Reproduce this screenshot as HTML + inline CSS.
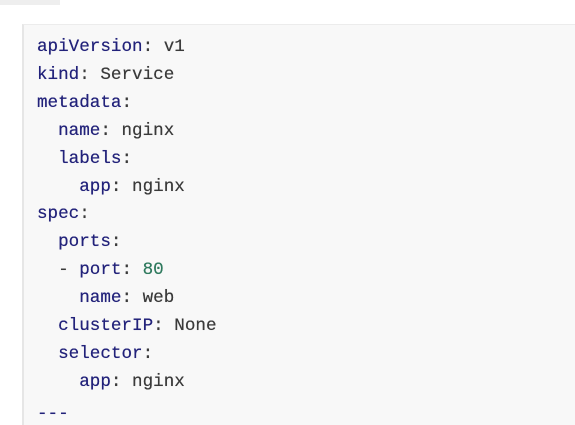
<!DOCTYPE html>
<html><head><meta charset="utf-8"><style>
html,body{margin:0;padding:0;width:575px;height:410px;overflow:hidden;background:#fff;}
.box{position:absolute;left:22px;top:24px;width:560px;height:400px;background:#f8f8f8;border-left:2px solid #e6e6e6;border-top:1px solid #ececec;}
pre{position:absolute;left:37px;top:34px;margin:0;font-family:"Liberation Mono",monospace;font-size:17.6px;line-height:27.9px;color:#3a3a3a;text-shadow:0 0 0.4px currentColor;}
.k{color:#22227a;}
.n{color:#2f7a5e;}
.d{position:relative;top:4px;}
.top{position:absolute;left:0;top:0;width:60px;height:5px;background:#eee;}
</style></head><body>
<div class="top"></div>
<div class="box"></div>
<pre><span class="k">apiVersion</span>: v1
<span class="k">kind</span>: Service
<span class="k">metadata</span>:
  <span class="k">name</span>: nginx
  <span class="k">labels</span>:
    <span class="k">app</span>: nginx
<span class="k">spec</span>:
  <span class="k">ports</span>:
  - <span class="k">port</span>: <span class="n">80</span>
    <span class="k">name</span>: web
  <span class="k">clusterIP</span>: None
  <span class="k">selector</span>:
    <span class="k">app</span>: nginx
<span class="k d">---</span></pre>
</body></html>
